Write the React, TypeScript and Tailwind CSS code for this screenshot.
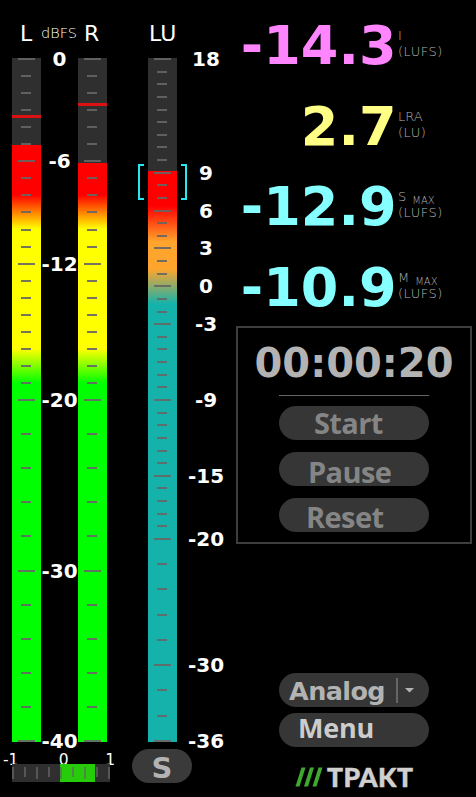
import clsx from "clsx"

type Tick = { value: number; major: boolean }

const LEVEL_LABELS = [0, -6, -12, -20, -30, -40]
const LOUDNESS_LABELS = [18, 9, 6, 3, 0, -3, -9, -15, -20, -30, -36]

// one tick per unit down to -20, then one for every second unit
const buildTicks = (max: number, min: number, labels: number[]): Tick[] => {
    const ticks: Tick[] = []
    for (let value = max; value >= min; value -= value > -20 ? 1 : 2) {
        ticks.push({ value, major: labels.includes(value) })
    }
    return ticks
}

const SCALE_HEIGHT = 682

const offsetOf = (value: number, max: number, min: number) =>
    Math.round(((max - value) / (max - min)) * SCALE_HEIGHT)

const readouts = [
    { value: "-14.3", color: "text-[#ff85ff]", name: "I", unit: "(LUFS)", max: false },
    { value: "2.7", color: "text-[#ffff85]", name: "LRA", unit: "(LU)", max: false },
    { value: "-12.9", color: "text-[#85ffff]", name: "S", unit: "(LUFS)", max: true },
    { value: "-10.9", color: "text-[#85ffff]", name: "M", unit: "(LUFS)", max: true },
]

type MeterProps = {
    max: number
    min: number
    labels: number[]
    gradient: string
    empty: number
    peak?: number
}

const Meter = ({ max, min, labels, gradient, empty, peak }: MeterProps) => (
    <div className={clsx("relative h-[684px] w-[29px] shrink-0", gradient)}>
        <div className="bg-[#2f2f2f]" style={{ height: empty }} />
        {buildTicks(max, min, labels).map(({ value, major }) => (
            <div
                key={value}
                className={clsx("absolute h-[2px] bg-[#666666]/90", major ? "left-[6px] w-[17px]" : "left-[9px] w-[10px]")}
                style={{ top: offsetOf(value, max, min) }}
            />
        ))}
        {peak !== undefined && <div className="absolute left-0 h-[3px] w-full bg-[#dd1111]" style={{ top: peak }} />}
    </div>
)

const Scale = ({ max, min, labels, className }: { max: number; min: number; labels: number[]; className: string }) => (
    <div className={clsx("relative h-[684px] shrink-0 text-[20px] leading-[20px] font-bold text-white", className)}>
        {labels.map((value) => (
            <div
                key={value}
                className="absolute inset-x-0 flex h-[20px] justify-center whitespace-nowrap"
                style={{ top: offsetOf(value, max, min) - 9 }}
            >
                {value}
            </div>
        ))}
    </div>
)

const LEVEL_GRADIENT =
    "bg-[linear-gradient(to_bottom,#ff0000_137px,#ffff00_171px,#ffff00_291px,#00ff00_325px)]"
const LOUDNESS_GRADIENT =
    "bg-[linear-gradient(to_bottom,#ff0000_148px,#ffa52d_184px,#ffa52d_211px,#14b2aa_246px)]"

const PILL = "flex h-[34px] w-[150px] shrink-0 rounded-full bg-[#363636]"

const Levels = () => (
    <section className="w-[132px] shrink-0">
        <div className="flex h-[58px] pt-[21px] pl-[20px] text-[22px] leading-[26px] text-white">
            <span className="w-[21px]">L</span>
            <span className="w-[43px] text-[14.5px] leading-[24px] font-extralight">dBFS</span>
            <span>R</span>
        </div>
        <div className="flex pl-[12px]">
            <Meter max={0} min={-40} labels={LEVEL_LABELS} gradient={LEVEL_GRADIENT} empty={87} peak={57} />
            <Scale max={0} min={-40} labels={LEVEL_LABELS} className="w-[37px]" />
            <Meter max={0} min={-40} labels={LEVEL_LABELS} gradient={LEVEL_GRADIENT} empty={105} peak={45} />
        </div>
        <div className="flex h-[22px] w-[115px] justify-between pt-[9px] pl-[3px] text-[15.5px] leading-[18px] font-normal text-white">
            <span>-1</span>
            <span className="pl-[4px]">0</span>
            <span>1</span>
        </div>
        <div className="relative ml-[12px] h-[18px] w-[98px] bg-[#2f2f2f]">
            <div className="ml-[48px] h-full w-[35px] bg-[#26cc0a]" />
            <div className="absolute inset-x-0 top-[3px] flex justify-between">
                {[-1, -0.75, -0.5, -0.25, 0, 0.25, 0.5, 0.75, 1].map((value) => (
                    <div
                        key={value}
                        className={clsx("w-[2px] bg-[#666666]/70", Number.isInteger(value * 2) ? "h-[12px]" : "h-[10px]")}
                    />
                ))}
            </div>
        </div>
    </section>
)

const Loudness = () => (
    <section className="w-[104px] shrink-0">
        <div className="h-[58px] pt-[21px] pl-[17px] text-[22px] leading-[26px] text-white">LU</div>
        <div className="relative flex pl-[16px]">
            <Meter max={18} min={-36} labels={LOUDNESS_LABELS} gradient={LOUDNESS_GRADIENT} empty={113} />
            <Scale max={18} min={-36} labels={LOUDNESS_LABELS} className="ml-[8px] w-[42px]" />
            <div className="absolute top-[106px] left-[6px] h-[36px] w-[6px] border-2 border-r-0 border-[#25e8f0]" />
            <div className="absolute top-[106px] left-[49px] h-[36px] w-[6px] border-2 border-l-0 border-[#25e8f0]" />
        </div>
        <button className="mt-[7px] flex h-[34px] w-[60px] items-center justify-center rounded-full bg-[#3a3a3a] pt-[4px] text-[29px] leading-[34px] font-bold text-[#b3b3b3]">
            S
        </button>
    </section>
)

const Readout = ({ value, color, name, unit, max }: (typeof readouts)[number]) => (
    <div className="flex h-[80.7px]">
        <div className={clsx("flex w-[160.5px] justify-end text-[54px] leading-[60px] font-bold whitespace-nowrap", color)}>{value}</div>
        <div className="pt-[12px] pl-[1.5px] text-[13px] leading-[16px] font-extralight text-[#b0b0b0]">
            <div className="flex h-[16px] gap-[6px]">
                {name}
                {max && <span className="pt-[5px] text-[10px] leading-[14px]">MAX</span>}
            </div>
            <div className="tracking-[0.5px]">{unit}</div>
        </div>
    </div>
)

const Timer = () => (
    <div className="flex h-[218px] w-[236px] flex-col items-center border-2 border-[#3e3e3e]">
        <div className="mt-[11px] h-[56px] text-[40px] leading-[48px] font-bold whitespace-nowrap text-[#b3b3b3]">00:00:20</div>
        <div className="h-px w-[150px] bg-[#666666]" />
        <div className="mt-[10px] flex flex-col gap-[12px] font-['Open_Sans'] text-[29px] leading-[33px] font-bold tracking-[-0.6px] text-[#858585]">
            <button className={clsx(PILL, "pl-[35px]")}>Start</button>
            <button className={clsx(PILL, "pt-[3px] pl-[29px]")}>Pause</button>
            <button className={clsx(PILL, "pt-[2px] pl-[27px]")}>Reset</button>
        </div>
    </div>
)

const Logo = () => (
    <div className="flex h-[20px] items-center pl-[59px]">
        <svg width="28" height="20" viewBox="0 0 28 20" fill="#3fa92f">
            <path d="M0.500 19.500L6.500 0.500H10.500L4.500 19.500ZM9 19.500L15 0.500H19L13 19.500ZM17.500 19.500L23.500 0.500H27.500L21.500 19.500Z" />
        </svg>
        <span className="pl-[4px] font-['Lato'] text-[26.5px] leading-[20px] font-black tracking-[0.4px] text-[#d0d0d0] [-webkit-text-stroke:0.5px_#d0d0d0]">TPAKT</span>
    </div>
)

const App = () => (
    <main className="flex h-[797px] w-[476px] overflow-hidden bg-black font-['DejaVu_Sans',sans-serif]">
        <Levels />
        <Loudness />
        <section className="w-[240px] shrink-0">
            <div className="h-[326px] pt-[16px]">
                {readouts.map((readout) => (
                    <Readout key={readout.name} {...readout} />
                ))}
            </div>
            <Timer />
            <div className="mt-[129px] flex flex-col gap-[6px] pl-[43px]">
                <button className={clsx(PILL, "items-center pl-[10px] text-[#b3b3b3]")}>
                    <span className="w-[107px] pt-[2px] text-left text-[25.5px] leading-[32px] font-bold tracking-[-0.6px]">Analog</span>
                    <span className="h-[25px] w-[2px] bg-[#666666]" />
                    <svg className="ml-[7px]" width="9" height="5" viewBox="0 0 9 5" fill="currentColor">
                        <path d="M0 0H9L4.500 4.500Z" />
                    </svg>
                </button>
                <button className={clsx(PILL, "pl-[19px] font-['Open_Sans'] text-[27px] leading-[30px] font-bold tracking-[-0.2px] text-[#cccccc]")}>
                    Menu
                </button>
            </div>
            <div className="mt-[20px]">
                <Logo />
            </div>
        </section>
    </main>
)

export default App
